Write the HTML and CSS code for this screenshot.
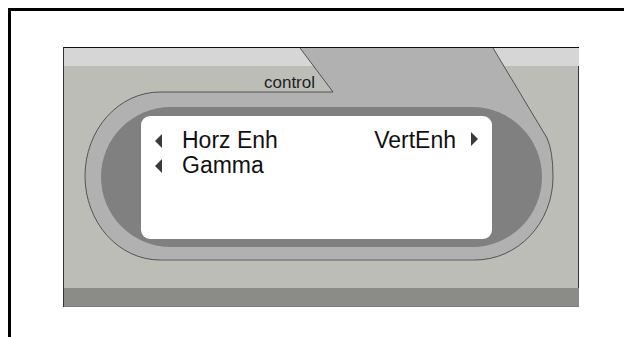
FILE: index.html
```html
<!DOCTYPE html>
<html>
<head>
  <title>Control panel</title>
  <meta charset="UTF-8" />
  <link rel="stylesheet" href="styles.css">
</head>
<body>
  <div class="frame">
    <div class="panel">
      <svg class="panel-art" width="516" height="260" viewBox="0 0 516 260">
        <!-- tab + racetrack ring -->
        <path class="ring" d="M237,1 L430,1 L484,91 Q490,104 490,130 A78,83 0 0 1 412,213 L97,213 A75,84 0 0 1 97,45 L270,45 Z" />
        <path class="well" d="M108,60 L409,60 A70,70 0 0 1 409,200 L108,200 A70,70 0 0 1 108,60 Z" />
        <path class="edge" d="M237,1 L270,45 L97,45 A75,84 0 0 0 97,213" />
        <path class="edge" d="M412,213 A78,83 0 0 0 490,130 Q490,104 484,91 L430,1" />
        <path class="edge-low" d="M97,213 L412,213" />
        <text class="tab-label" x="252" y="41" text-anchor="end">control</text>
      </svg>

      <div class="band-top"></div>
      <div class="body">
        <div class="display">
          <div class="row">
            <span class="item"><span class="arrow left"></span>Horz Enh</span>
            <span class="item">VertEnh<span class="arrow right"></span></span>
          </div>
          <div class="row">
            <span class="item"><span class="arrow left"></span>Gamma</span>
          </div>
        </div>
      </div>
      <div class="band-bottom"></div>
    </div>
  </div>
</body>
</html>
```

FILE: styles.css
```css
body { margin: 0; overflow: hidden; background: #fff; font-family: "Liberation Sans", Arial, sans-serif; }
.frame { margin: 8px 0 0 8px; height: calc(100vh - 8px); border-top: 3px solid #000; border-left: 3px solid #000; box-sizing: border-box; padding: 36px 0 0 52px; }

.panel { position: relative; width: 516px; height: 260px; box-sizing: border-box; border-top: 1px solid #111; border-left: 1px solid #333; display: flex; flex-direction: column; }
.panel-art { position: absolute; top: -1px; left: -1px; }
.ring { fill: #b1b1b1; }
.well { fill: #808080; }
.edge { fill: none; stroke: #3a3a3a; stroke-width: 0.8; }
.edge-low { fill: none; stroke: #7c7c7c; stroke-width: 1.5; }
.tab-label { font-family: "Liberation Sans", Arial, sans-serif; font-size: 17px; fill: #222; }

.band-top { height: 18px; background: #d6d6d6; }
.body { flex: 1; background: #bdbdb8; border-right: 1px solid #333; padding: 50px 0 0 77px; }
.band-bottom { height: 18px; background: #8b8c87; border-bottom: 1px solid #7a7a7a; }

.display { position: relative; width: 351px; height: 123px; box-sizing: border-box; background: #fff; border-radius: 9px; padding: 12px 14px 0 14px; font-size: 23px; color: #111; }
.row { display: flex; justify-content: space-between; line-height: 25px; }
.item { display: flex; align-items: center; }
.arrow { width: 0; height: 0; border-top: 7px solid transparent; border-bottom: 7px solid transparent; }
.arrow.left { border-right: 7px solid #3a3a3a; margin-right: 20px; }
.arrow.right { border-left: 7px solid #3a3a3a; margin-left: 15px; margin-top: -4px; }
```
